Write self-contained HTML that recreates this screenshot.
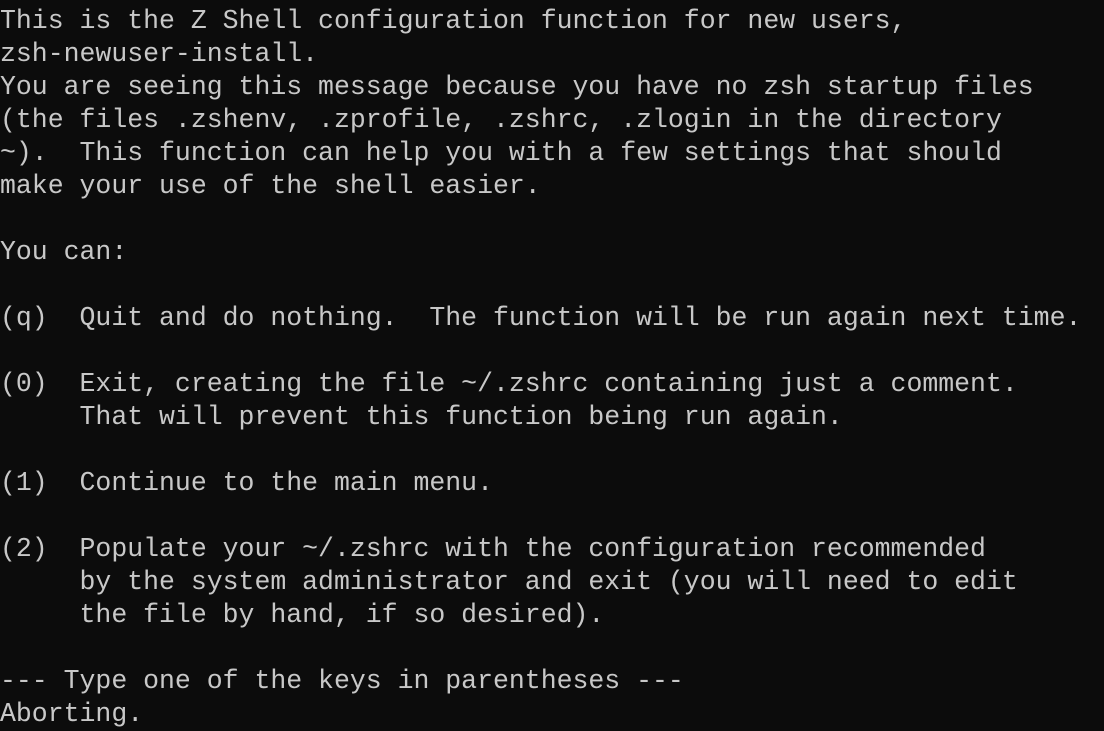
<!DOCTYPE html>
<html><head><meta charset="utf-8"><style>
html,body{margin:0;padding:0;background:#0c0c0c;width:1104px;height:710px;overflow:hidden}
pre{margin:0;position:absolute;left:0;top:5px;font-family:"Liberation Mono",monospace;font-size:26.5px;letter-spacing:0px;line-height:33px;color:#c8c8c8;white-space:pre}
</style></head><body><pre>This is the Z Shell configuration function for new users,
zsh-newuser-install.
You are seeing this message because you have no zsh startup files
(the files .zshenv, .zprofile, .zshrc, .zlogin in the directory
~).  This function can help you with a few settings that should
make your use of the shell easier.

You can:

(q)  Quit and do nothing.  The function will be run again next time.

(0)  Exit, creating the file ~/.zshrc containing just a comment.
     That will prevent this function being run again.

(1)  Continue to the main menu.

(2)  Populate your ~/.zshrc with the configuration recommended
     by the system administrator and exit (you will need to edit
     the file by hand, if so desired).

--- Type one of the keys in parentheses ---
Aborting.</pre></body></html>
